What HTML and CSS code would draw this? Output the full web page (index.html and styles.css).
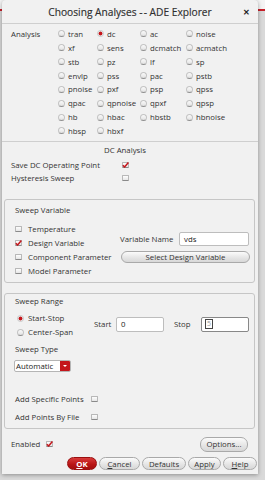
FILE: index.html
```html
<!DOCTYPE html>
<html>
<head>
<meta charset="utf-8">
<link rel="stylesheet" href="styles.css">
</head>
<body>
<div class="dialog">
  <div class="titlebar">
    <span></span>
    <span class="title">Choosing Analyses <span class="dashes">--</span> ADE Explorer</span>
    <span class="close">&#x2715;</span>
  </div>

  <div class="analysis">
    <div class="alabel">Analysis</div>
    <label class="ritem"><span class="radio"></span>tran</label>
    <label class="ritem"><span class="radio on"></span>dc</label>
    <label class="ritem"><span class="radio"></span>ac</label>
    <label class="ritem"><span class="radio"></span>noise</label>
    <div></div>
    <label class="ritem"><span class="radio"></span>xf</label>
    <label class="ritem"><span class="radio"></span>sens</label>
    <label class="ritem"><span class="radio"></span>dcmatch</label>
    <label class="ritem"><span class="radio"></span>acmatch</label>
    <div></div>
    <label class="ritem"><span class="radio"></span>stb</label>
    <label class="ritem"><span class="radio"></span>pz</label>
    <label class="ritem"><span class="radio"></span>lf</label>
    <label class="ritem"><span class="radio"></span>sp</label>
    <div></div>
    <label class="ritem"><span class="radio"></span>envlp</label>
    <label class="ritem"><span class="radio"></span>pss</label>
    <label class="ritem"><span class="radio"></span>pac</label>
    <label class="ritem"><span class="radio"></span>pstb</label>
    <div></div>
    <label class="ritem"><span class="radio"></span>pnoise</label>
    <label class="ritem"><span class="radio"></span>pxf</label>
    <label class="ritem"><span class="radio"></span>psp</label>
    <label class="ritem"><span class="radio"></span>qpss</label>
    <div></div>
    <label class="ritem"><span class="radio"></span>qpac</label>
    <label class="ritem"><span class="radio"></span>qpnoise</label>
    <label class="ritem"><span class="radio"></span>qpxf</label>
    <label class="ritem"><span class="radio"></span>qpsp</label>
    <div></div>
    <label class="ritem"><span class="radio"></span>hb</label>
    <label class="ritem"><span class="radio"></span>hbac</label>
    <label class="ritem"><span class="radio"></span>hbstb</label>
    <label class="ritem"><span class="radio"></span>hbnoise</label>
    <div></div>
    <label class="ritem"><span class="radio"></span>hbsp</label>
    <label class="ritem"><span class="radio"></span>hbxf</label>
  </div>

  <div class="dc">
    <div class="dc-title">DC Analysis</div>
    <div class="dc-row"><span class="dc-label">Save DC Operating Point</span><span class="cb on"><svg width="7" height="6" viewBox="0 0 7 6"><path d="M0.8 3.2 L2.6 5 L6.4 0.6" stroke="#c4161c" stroke-width="1.5" fill="none"/></svg></span></div>
    <div class="dc-row"><span class="dc-label">Hysteresis Sweep</span><span class="cb"></span></div>
  </div>

  <div class="box sv">
    <div class="box-title">Sweep Variable</div>
    <div class="sv-body">
      <div class="sv-left">
        <div class="crow"><span class="cb"></span>Temperature</div>
        <div class="crow"><span class="cb on"><svg width="7" height="6" viewBox="0 0 7 6"><path d="M0.8 3.2 L2.6 5 L6.4 0.6" stroke="#c4161c" stroke-width="1.5" fill="none"/></svg></span>Design Variable</div>
        <div class="crow"><span class="cb"></span>Component Parameter</div>
        <div class="crow"><span class="cb"></span>Model Parameter</div>
      </div>
      <div class="sv-right">
        <div class="vn-row"><span class="vn-label">Variable Name</span><span class="input vn-input">vds</span></div>
        <div class="btn sel-btn">Select Design Variable</div>
      </div>
    </div>
  </div>

  <div class="box sr">
    <div class="box-title sr-title">Sweep Range</div>
    <div class="sr-top">
      <div class="sr-radios">
        <div class="rrow"><span class="radio on"></span>Start-Stop</div>
        <div class="rrow"><span class="radio"></span>Center-Span</div>
      </div>
      <div class="sr-fields">
        <span class="f-label start-l">Start</span><span class="input f-input">0</span>
        <span class="f-label stop-l">Stop</span><span class="input f-input focus"><span class="caret">5</span></span>
      </div>
    </div>
    <div class="st-label">Sweep Type</div>
    <div class="select"><span class="sel-text">Automatic</span><span class="sel-arrow"></span></div>
    <div class="add-row first"><span class="add-label">Add Specific Points</span><span class="cb"></span></div>
    <div class="add-row"><span class="add-label">Add Points By File</span><span class="cb"></span></div>
  </div>

  <div class="enabled-row">
    <span class="en-label">Enabled</span>
    <span class="cb on"><svg width="7" height="6" viewBox="0 0 7 6"><path d="M0.8 3.2 L2.6 5 L6.4 0.6" stroke="#c4161c" stroke-width="1.5" fill="none"/></svg></span>
    <span class="spacer"></span>
    <div class="btn opt-btn">Options...</div>
  </div>

  <div class="buttons">
    <div class="btn ok"><u>O</u>K</div>
    <div class="btn b-cancel"><u>C</u>ancel</div>
    <div class="btn b-defaults">Defaults</div>
    <div class="btn b-apply">Apply</div>
    <div class="btn b-help"><u>H</u>elp</div>
  </div>
</div>
</body>
</html>
```

FILE: styles.css
```css
* { box-sizing: border-box; }
html, body { margin: 0; padding: 0; }
body {
  width: 265px;
  height: 480px;
  overflow: hidden;
  background: linear-gradient(to bottom, #f4f4f4 0, #f4f4f4 9px, #c8202a 9px, #c8202a 11px, #d9d9d9 11px, #d9d9d9 100%);
  font-family: "Open Sans", "Noto Sans", sans-serif;
  font-size: 7.8px;
  color: #333;
}
.dialog {
  margin-left: 2px;
  width: 256px;
  height: 474px;
  background: #f1f1f1;
  border-radius: 4px 4px 0 0;
  box-shadow: 0 1px 4px rgba(0,0,0,0.35);
  display: flex;
  flex-direction: column;
}
.titlebar {
  height: 24px;
  border-bottom: 1px solid #cfcfcf;
  display: grid;
  grid-template-columns: 1fr auto 1fr;
  align-items: center;
}
.title {
  font-size: 10.2px;
  font-weight: 400;
  color: #2e2e2e;
  -webkit-text-stroke: 0.15px #2e2e2e;
  font-variant-ligatures: none;
}
.dashes { letter-spacing: 1.2px; margin-right: -1.2px; }
.close {
  justify-self: end;
  margin-right: 8px;
  font-size: 8px;
  font-weight: 700;
  color: #222;
}
.analysis {
  height: 118px;
  border-bottom: 1px solid #cfcfcf;
  padding: 3px 0 0 9px;
  display: grid;
  grid-template-columns: 47px 39px 43px 46px auto;
  grid-auto-rows: 13.86px;
  align-items: center;
}
.alabel { line-height: 12px; }
.ritem {
  display: flex;
  align-items: center;
  gap: 3px;
  line-height: 12px;
}
.radio {
  display: inline-block;
  flex: none;
  width: 7px;
  height: 7px;
  border-radius: 50%;
  border: 1px solid #c4c4c4;
  border-bottom-color: #8f8f8f;
  background: linear-gradient(#fafafa, #e2e2e2);
}
.radio.on {
  background: radial-gradient(circle, #c4161c 0, #c4161c 1.6px, #f2f2f2 2.3px);
  border-color: #c8c8c8;
}
.cb {
  display: inline-flex;
  align-items: center;
  justify-content: center;
  flex: none;
  width: 7px;
  height: 6px;
  border: 1px solid #b8b8b8;
  border-bottom-color: #8a8a8a;
  border-radius: 1px;
  background: linear-gradient(#fdfdfd, #e6e6e6);
  overflow: visible;
}
.cb svg { display: block; flex: none; margin-top: -1px; }
.dc {
  height: 57px;
  padding-top: 2px;
}
.dc-title {
  line-height: 12px;
  text-align: center;
  margin-left: -10px;
}
.dc-row {
  display: flex;
  align-items: center;
  height: 13px;
  padding-left: 9px;
}
.dc-title + .dc-row { margin-top: 2.5px; }
.dc-label { width: 111px; }
.box {
  margin: 0 3px 0 2px;
  border: 1px solid #c6c6c6;
  border-radius: 3px;
}
.sv { height: 84px; padding: 4px 0 0 10px; }
.box-title { line-height: 12px; }
.sv-body { display: flex; margin-top: 6px; }
.sv-left { width: 105px; }
.crow {
  display: flex;
  align-items: center;
  gap: 6px;
  height: 14px;
}
.sv-right { padding-top: 9px; }
.vn-row { display: flex; align-items: center; height: 15px; }
.vn-label { width: 59px; }
.input {
  display: flex;
  align-items: center;
  background: #fff;
  border: 1px solid #bdbdbd;
  border-radius: 2px;
  padding-left: 4px;
  color: #222;
}
.vn-input { width: 70px; height: 14px; }
.btn {
  display: flex;
  align-items: center;
  justify-content: center;
  border: 1px solid #a9a9a9;
  border-radius: 7px;
  background: linear-gradient(#fbfbfb, #e4e4e4 60%, #d8d8d8);
  color: #333;
}
.sel-btn { width: 129px; height: 12px; margin-top: 5px; margin-left: 1px; }
.sr { margin-top: 10px; height: 136px; padding: 1px 0 0 10px; }
.sr-title { line-height: 12px; }
.sr-top { display: flex; margin-top: 4px; }
.sr-radios { width: 79px; padding-left: 2px; }
.rrow { display: flex; align-items: center; gap: 4px; height: 14px; }
.sr-fields { display: flex; align-items: center; height: 28px; padding-bottom: 2px; }
.f-label { line-height: 12px; }
.start-l { width: 22px; }
.stop-l { width: 27px; margin-left: 10px; }
.f-input { width: 48px; height: 15px; }
.f-input.focus { border-color: #888; padding-left: 3px; }
.caret {
  display: inline-block;
  border: 1px solid #444;
  line-height: 8px;
  height: 10px;
  padding: 0 1px;
  color: #999;
  font-size: 7px;
}
.st-label { line-height: 12px; margin-top: 4px; }
.select {
  display: flex;
  width: 57px;
  height: 12px;
  margin-top: 5px;
  margin-left: -1px;
  border: 1px solid #b5b5b5;
  border-radius: 2px;
  background: #fff;
  overflow: hidden;
}
.sel-text { flex: 1; line-height: 10px; padding-left: 1px; color: #222; }
.sel-arrow {
  width: 10px;
  background: #c4161c;
  display: flex;
  align-items: center;
  justify-content: center;
}
.sel-arrow::after {
  content: "";
  border-left: 2px solid transparent;
  border-right: 2px solid transparent;
  border-top: 2.5px solid #fff;
}
.add-row {
  display: flex;
  align-items: center;
  height: 14px;
  margin-top: 4px;
}
.add-row.first { margin-top: 20px; }
.add-label { width: 76px; }
.enabled-row {
  display: flex;
  align-items: center;
  height: 16px;
  margin-top: 7px;
  padding-left: 9px;
}
.en-label { width: 35px; }
.spacer { flex: 1; }
.opt-btn { width: 48px; height: 15px; margin-right: 10px; }
.buttons {
  display: flex;
  justify-content: flex-end;
  gap: 2px;
  margin-top: 5px;
  padding-right: 1px;
}
.buttons .btn { height: 13px; }
.buttons u { text-decoration: underline; }
.ok {
  width: 30px;
  background: linear-gradient(#d83a3a, #b81515 60%, #a50f0f);
  border-color: #9a1010;
  color: #fff;
  font-weight: 700;
}
.b-cancel { width: 41px; }
.b-defaults { width: 44px; }
.b-apply { width: 33px; }
.b-help { width: 34px; }
```
